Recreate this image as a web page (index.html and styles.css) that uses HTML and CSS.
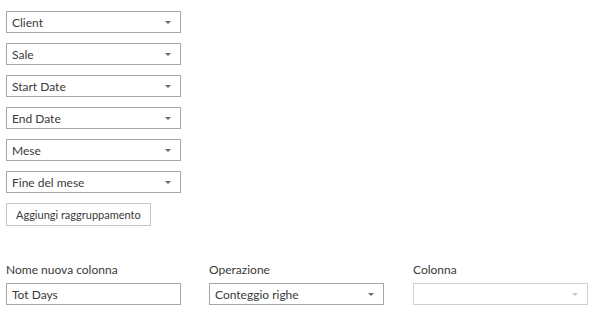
FILE: index.html
```html
<!DOCTYPE html>
<html lang="en">
<head>
    <meta charset="UTF-8">
    <title>Raggruppa per</title>
    <link rel="stylesheet" href="styles.css">
</head>
<body>

<div class="container">
    <div class="group-list">
        <div class="select"><span>Client</span><i class="arrow"></i></div>
        <div class="select"><span>Sale</span><i class="arrow"></i></div>
        <div class="select"><span>Start Date</span><i class="arrow"></i></div>
        <div class="select"><span>End Date</span><i class="arrow"></i></div>
        <div class="select"><span>Mese</span><i class="arrow"></i></div>
        <div class="select"><span>Fine del mese</span><i class="arrow"></i></div>
    </div>
    <button class="add-btn">Aggiungi raggruppamento</button>

    <div class="aggregation">
        <div class="field">
            <label>Nome nuova colonna</label>
            <div class="input">Tot Days</div>
        </div>
        <div class="field">
            <label>Operazione</label>
            <div class="select"><span>Conteggio righe</span><i class="arrow"></i></div>
        </div>
        <div class="field">
            <label>Colonna</label>
            <div class="select disabled"><span></span><i class="arrow"></i></div>
        </div>
    </div>
</div>

</body>
</html>
```

FILE: styles.css
```css
body {
    margin: 0;
    font-family: Lato, "Noto Sans", sans-serif;
    font-size: 12px;
    color: #3a3a3a;
    background-color: #fff;
}

.container {
    padding: 11px 0 0 6px;
}

.group-list {
    display: flex;
    flex-direction: column;
    gap: 10px;
}

.select,
.input {
    width: 175px;
    height: 22px;
    box-sizing: border-box;
    border: 1px solid #a6a6a6;
    display: flex;
    align-items: center;
    justify-content: space-between;
    padding: 0 9px 0 5px;
    background-color: #fff;
}

.arrow {
    width: 0;
    height: 0;
    border-left: 3px solid transparent;
    border-right: 3px solid transparent;
    border-top: 3px solid #6b6b6b;
}

.select.disabled {
    border-color: #cfcfcf;
}

.select.disabled .arrow {
    border-top-color: #c8c8c8;
}

.add-btn {
    margin-top: 10px;
    height: 23px;
    padding: 0 9px;
    font-family: inherit;
    font-size: 11px;
    color: #3a3a3a;
    background-color: #fff;
    border: 1px solid #c6c6c6;
}

.aggregation {
    display: flex;
    margin-top: 36px;
}

.field {
    flex: 0 0 203px;
    display: flex;
    flex-direction: column;
    gap: 6px;
}

.field:nth-child(2) {
    flex-basis: 204px;
}

.field:last-child {
    flex-basis: 175px;
}
```
